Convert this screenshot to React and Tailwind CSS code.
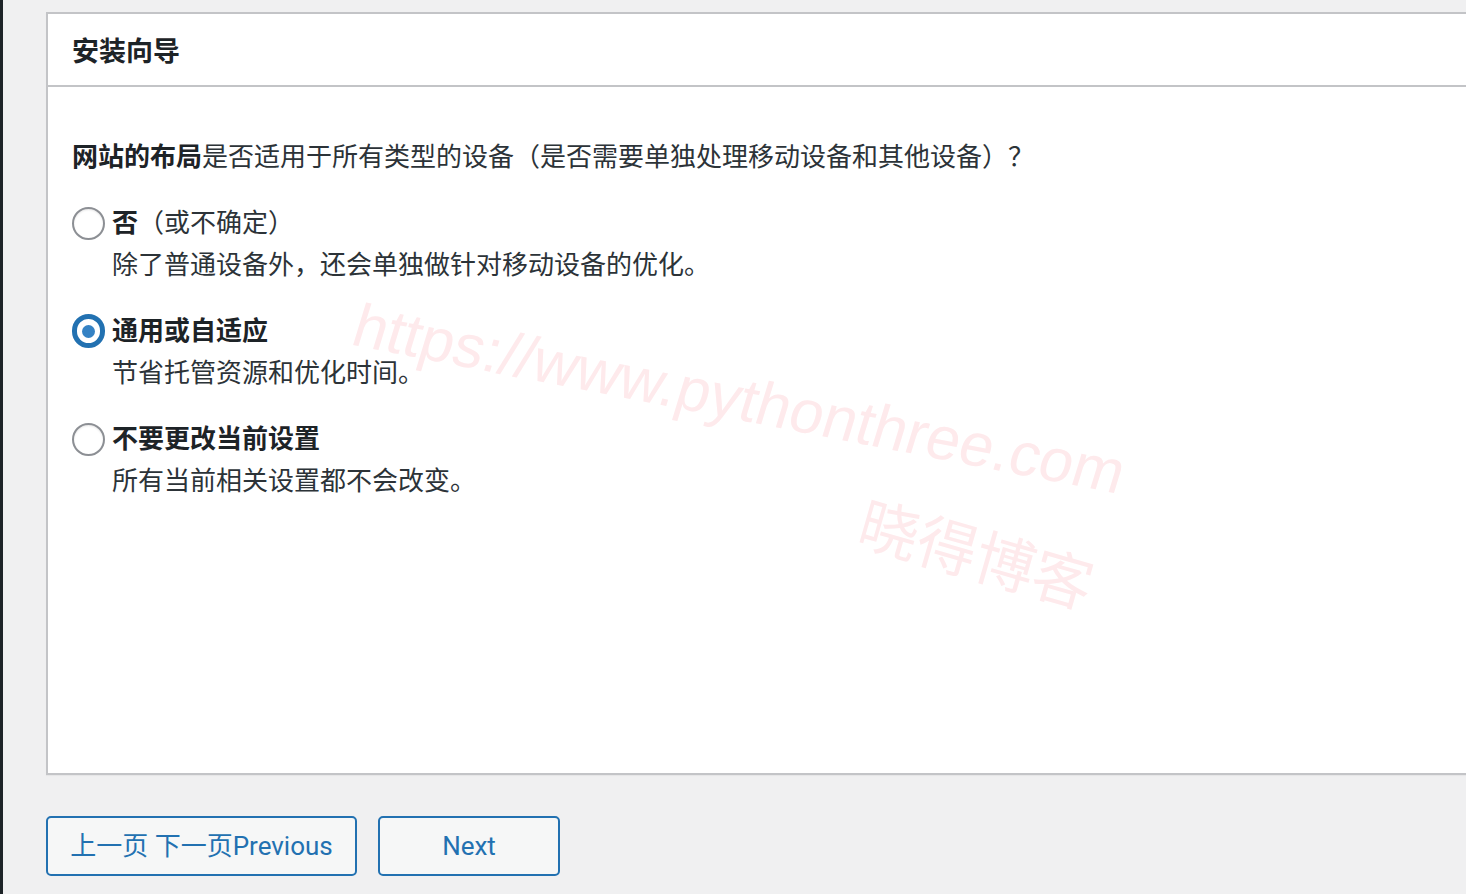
import React, { useState } from 'react';

const FONT = "font-['Roboto','Noto_Sans_CJK_SC',sans-serif]";

const options = [
  { id: 'no', label: '否', extra: '（或不确定）', desc: '除了普通设备外，还会单独做针对移动设备的优化。' },
  { id: 'responsive', label: '通用或自适应', extra: '', desc: '节省托管资源和优化时间。' },
  { id: 'keep', label: '不要更改当前设置', extra: '', desc: '所有当前相关设置都不会改变。' },
];

// Radio circle, WP admin style
const Radio = ({ checked }) =>
  checked ? (
    <span className="flex h-[34px] w-[34px] items-center justify-center rounded-full border-[5px] border-[#2271b1] bg-white">
      <span className="h-[13px] w-[13px] rounded-full bg-[#3582c4]" />
    </span>
  ) : (
    <span className="block h-[33px] w-[33px] rounded-full border-2 border-[#8c8f94] bg-white shadow-[inset_0_1px_2px_rgba(0,0,0,0.1)]" />
  );

export default function App() {
  const [selected, setSelected] = useState('responsive');

  return (
    <div className={`relative flex h-[894px] w-full overflow-hidden bg-[#f0f0f1] ${FONT}`}>
      {/* admin sidebar edge */}
      <div className="w-[3px] shrink-0 bg-[#1d2327]" />

      <div className="flex flex-1 flex-col pl-[43px] pt-[12px]">
        {/* Wizard card */}
        <div className="flex h-[763px] flex-col border-2 border-r-0 border-[#c3c4c7] bg-white shadow-[0_1px_1px_rgba(0,0,0,0.04)]">
          <div className="flex h-[73px] shrink-0 items-center border-b-2 border-[#c3c4c7] px-[24px] pt-[5px]">
            <h2 className="text-[27px] font-bold leading-none text-[#1d2327]">安装向导</h2>
          </div>

          <div className="flex flex-col gap-[24px] px-[24px] pt-[49px]">
            <p className="text-[26px] leading-[42px] text-[#2c3338]">
              <span className="font-bold text-[#1d2327]">网站的布局</span>
              是否适用于所有类型的设备（是否需要单独处理移动设备和其他设备）？
            </p>

            {options.map((opt) => (
              <label
                key={opt.id}
                className="flex cursor-pointer items-start gap-[7px]"
                onClick={() => setSelected(opt.id)}
              >
                <span className="flex h-[42px] w-[33px] items-center justify-center">
                  <Radio checked={selected === opt.id} />
                </span>
                <span className="flex flex-col">
                  <span className="text-[26px] leading-[42px] text-[#1d2327]">
                    <span className="font-bold">{opt.label}</span>
                    <span className="text-[#2c3338]">{opt.extra}</span>
                  </span>
                  <span className="text-[26px] leading-[42px] text-[#2c3338]">{opt.desc}</span>
                </span>
              </label>
            ))}
          </div>
        </div>

        {/* Footer buttons */}
        <div className="mt-[41px] flex gap-[21px]">
          <button
            type="button"
            className="flex h-[60px] w-[311px] items-center justify-center rounded-[5px] border-2 border-[#2271b1] bg-[#f6f7f7] text-[26px] text-[#2271b1]"
          >
            上一页 下一页Previous
          </button>
          <button
            type="button"
            className="flex h-[60px] w-[182px] items-center justify-center rounded-[5px] border-2 border-[#2271b1] bg-[#f6f7f7] text-[26px] text-[#2271b1]"
          >
            Next
          </button>
        </div>
      </div>

      {/* watermark */}
      <div className="pointer-events-none absolute left-[355px] top-[294px] origin-left rotate-[11deg] skew-x-[-6deg] whitespace-nowrap font-['Liberation_Sans',sans-serif] text-[61px] leading-none text-[#feeaec]">
        https://www.pythonthree.com
      </div>
      <div className="pointer-events-none absolute left-[862px] top-[488px] origin-left rotate-[16deg] whitespace-nowrap font-['Noto_Sans_CJK_SC',sans-serif] text-[60px] leading-none text-[#feeaec]">
        晓得博客
      </div>
    </div>
  );
}
